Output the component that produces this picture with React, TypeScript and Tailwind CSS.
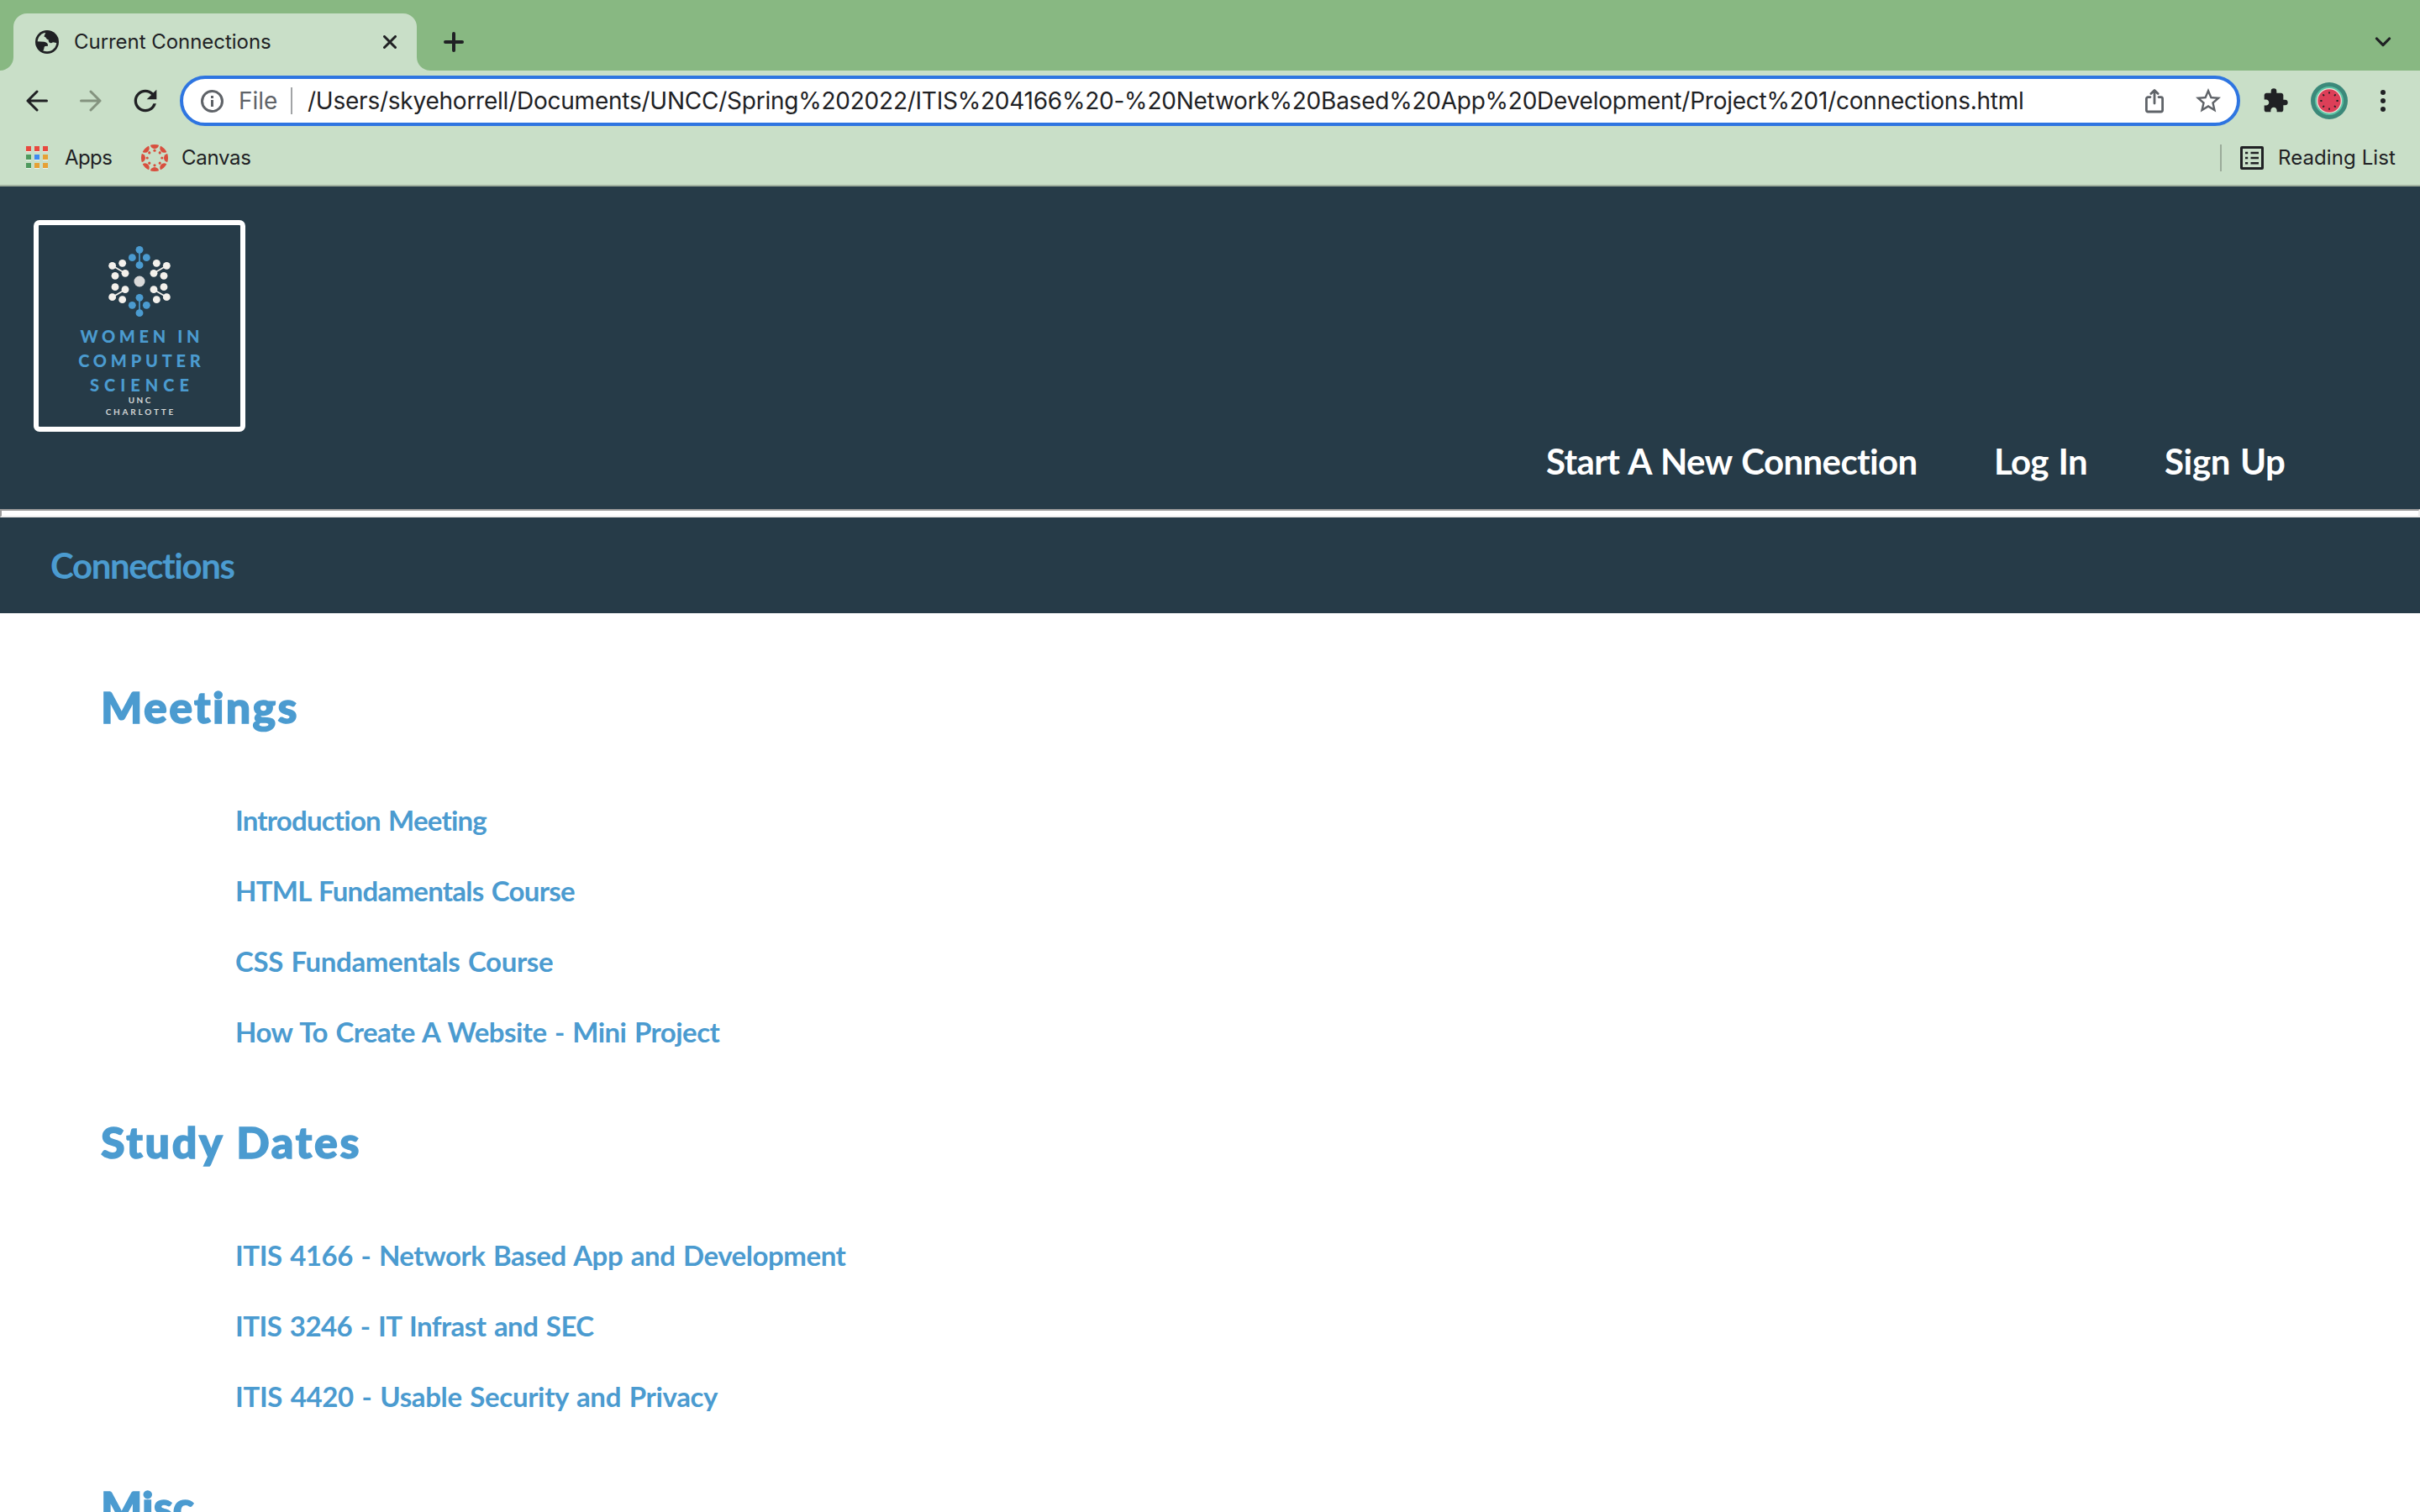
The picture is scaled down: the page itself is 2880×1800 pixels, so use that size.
import React from 'react';
import { MdExtension, MdRefresh, MdStarBorder } from 'react-icons/md';

function GlobeIcon() {
  return (
    <svg className="size-7" viewBox="66 48 84 84">
      <circle cx="108" cy="90" r="42" fill="#202124" />
      <circle cx="108" cy="90" r="34" fill="#c9dfc8" />
      <path fill="#202124" d="M102 50C105 60 97 64 98 71C106 71 103 80 113 82C112 92 121 98 129 91L144 94C146 66 124 48 102 50Z" />
      <path fill="#202124" d="M70 88L98 89C108 91 112 96 111 104L101 105C95 108 100 116 92 123C78 118 69 104 70 88Z" />
    </svg>
  );
}

function ArrowIcon({ className }: { className: string }) {
  return (
    <svg className={className} viewBox="0 0 26 26" fill="none" stroke="currentColor" strokeWidth="3" strokeLinecap="round" strokeLinejoin="round">
      <path d="M13 2L2 13L13 24M2 13H24.5" />
    </svg>
  );
}

function CanvasIcon() {
  const angles = [0, 45, 90, 135, 180, 225, 270, 315];
  return (
    <svg className="size-8" viewBox="-16 -16 32 32" fill="#d84f3e">
      <clipPath id="canvas-disc">
        <circle r="16" />
      </clipPath>
      <g clipPath="url(#canvas-disc)">
        {angles.map((a) => (
          <circle key={a} cx="0" cy="-16.2" r="5.2" transform={`rotate(${a})`} />
        ))}
      </g>
      {angles.map((a) => (
        <circle key={a} cx="0" cy="-8.8" r="1.6" transform={`rotate(${a})`} />
      ))}
    </svg>
  );
}

function WatermelonAvatar() {
  return (
    <svg className="size-11" viewBox="-22 -22 44 44">
      <circle r="22" fill="#3c897a" />
      <circle r="17" fill="#5cc4a6" />
      <circle r="15" fill="#f3e3da" />
      <circle r="13.7" fill="#dc3f58" />
      {[0, 45, 90, 135, 180, 225, 270, 315].map((a) => (
        <rect key={a} x="-0.9" y="-10.8" width="1.8" height="2.4" rx="0.6" fill="#202124" transform={`rotate(${a})`} />
      ))}
    </svg>
  );
}

const appColors = [
  'bg-[#e8493f]', 'bg-[#e8493f]', 'bg-[#e8493f]',
  'bg-[#4f9a5e]', 'bg-[#3f8bf0]', 'bg-[#e6a135]',
  'bg-[#4f9a5e]', 'bg-[#e6a135]', 'bg-[#e6a135]',
];

function TabStrip() {
  return (
    <div className="flex h-[84px] items-end bg-[#88b882]">
      <svg className="size-4" viewBox="0 0 16 16"><path fill="#c9dfc8" d="M16 0V16H0A16 16 0 0 0 16 0Z" /></svg>
      <div className="flex h-[68px] w-[480px] items-center rounded-t-2xl bg-[#c9dfc8] pl-[26px] pr-6 text-[24px]">
        <GlobeIcon />
        <span className="ml-[18px] leading-[28px] -tracking-[0.04px]">Current Connections</span>
        <svg className="ml-auto size-4" viewBox="0 0 16 16" stroke="#202124" strokeWidth="3" strokeLinecap="round"><path d="M1.5 1.5L14.5 14.5M14.5 1.5L1.5 14.5" /></svg>
      </div>
      <svg className="size-4" viewBox="0 0 16 16"><path fill="#c9dfc8" d="M0 0V16H16A16 16 0 0 1 0 0Z" /></svg>
      <div className="ml-4 flex h-[68px] items-center">
        <svg className="size-6" viewBox="0 0 24 24" stroke="#202124" strokeWidth="4" strokeLinecap="round"><path d="M12 2V22M2 12H22" /></svg>
      </div>
      <div className="ml-auto mr-[34px] flex h-[68px] items-center">
        <svg className="h-3 w-[20px]" viewBox="0 0 20 12" fill="none" stroke="#202124" strokeWidth="3.2" strokeLinecap="round" strokeLinejoin="round"><path d="M2.5 2L10 9.6L17.5 2" /></svg>
      </div>
    </div>
  );
}

function Toolbar() {
  return (
    <div className="flex h-[72px] items-center pl-[31px] text-[#202124]">
      <ArrowIcon className="size-[26px]" />
      <ArrowIcon className="ml-[38px] size-[26px] rotate-180 text-[#84937f]" />
      <MdRefresh className="ml-8 size-10" />
      <div className="ml-[21px] flex h-[60px] w-[2452px] items-center rounded-full border-4 border-[#2e75e1] bg-white pl-[21px] pr-4 text-[28px] text-[#5f6368]">
        <svg className="size-[27px]" viewBox="0 0 27 27" fill="none" stroke="currentColor" strokeWidth="3">
          <circle cx="13.5" cy="13.5" r="12" />
          <path d="M13.5 12V20M13.5 7V10" />
        </svg>
        <span className="ml-[18px] w-[62px] leading-8">File</span>
        <span className="h-8 w-0.5 bg-[#a2a4a6]" />
        <span className="ml-[18px] leading-8 -tracking-[0.236px] whitespace-nowrap text-[#202124]">
          /Users/skyehorrell/Documents/UNCC/Spring%202022/ITIS%204166%20-%20Network%20Based%20App%20Development/Project%201/connections.html
        </span>
        <svg className="ml-auto h-[30px] w-[22px]" viewBox="0 0 22 30" fill="none" stroke="currentColor" strokeWidth="2.8" strokeLinecap="round" strokeLinejoin="round">
          <path d="M6 10.6H3.4A2 2 0 0 0 1.4 12.6V26A2 2 0 0 0 3.4 28H18.6A2 2 0 0 0 20.6 26V12.6A2 2 0 0 0 18.6 10.6H16M11 18V3M6.8 6.6L11 2.4L15.2 6.6" />
        </svg>
        <MdStarBorder className="ml-[35px] size-9" />
      </div>
      <MdExtension className="ml-[26px] size-8" />
      <div className="ml-[26px]"><WatermelonAvatar /></div>
      <div className="ml-[39px] flex flex-col gap-1">
        <i className="size-1.5 rounded-full bg-[#202124]" />
        <i className="size-1.5 rounded-full bg-[#202124]" />
        <i className="size-1.5 rounded-full bg-[#202124]" />
      </div>
    </div>
  );
}

function BookmarkBar() {
  return (
    <div className="flex h-[66px] items-center border-b-2 border-[#a1b2a0] pl-[31px] pr-7 text-[24px]">
      <div className="-mt-0.5 grid grid-cols-[6px_6px_6px] gap-1">
        {appColors.map((c, i) => (
          <i key={i} className={`size-1.5 shadow-[0_1px_0_#eef5ee] ${c}`} />
        ))}
      </div>
      <span className="ml-5 w-[91px] leading-[28px] -tracking-[0.6px]">Apps</span>
      <CanvasIcon />
      <span className="ml-4 leading-[28px] -tracking-[0.3px]">Canvas</span>
      <span className="ml-auto mr-[22px] h-8 w-0.5 bg-[#9bab99]" />
      <svg className="size-7" viewBox="0 0 28 28" fill="none" stroke="#202124" strokeWidth="3">
        <rect x="1.5" y="1.5" width="25" height="25" rx="0.5" />
        <path strokeWidth="2.6" d="M6 8H9.2M12.5 8H22M6 14H9.2M12.5 14H22M6 20.3H9.2M12.5 20.3H22" />
      </svg>
      <span className="ml-[17px] w-[141px] leading-[28px] tracking-[0.09px] whitespace-nowrap">Reading List</span>
    </div>
  );
}

const whiteNodes = [
  [311, 199], [357, 226], [347, 190], [321, 235],
  [505, 199], [459, 226], [469, 190], [495, 235],
  [311, 311], [357, 284], [347, 320], [321, 275],
  [505, 311], [459, 284], [469, 320], [495, 275],
];
const blueNodes = [
  [408, 142], [408, 197], [382, 170], [433, 170],
  [408, 313], [408, 368], [382, 340], [433, 340],
];

function MoleculeMark() {
  return (
    <svg className="h-[90px] w-20" viewBox="288 120 240 270">
      <path stroke="#f4f1ec" strokeWidth="5" d="M311 199L357 226M505 199L459 226M311 311L357 284M505 311L459 284" />
      <path stroke="#4b9bd0" strokeWidth="5" d="M408 142V197M408 313V368" />
      <g fill="#f4f1ec">
        {whiteNodes.map(([x, y]) => (
          <circle key={`${x}-${y}`} cx={x} cy={y} r="13.3" />
        ))}
      </g>
      <g fill="#4b9bd0">
        {blueNodes.map(([x, y]) => (
          <circle key={`${x}-${y}`} cx={x} cy={y} r="13.3" />
        ))}
      </g>
      <circle cx="408" cy="255" r="19.5" fill="#d9d9d9" />
    </svg>
  );
}

function Logo() {
  return (
    <div className="flex size-[252px] flex-col items-center rounded-[7px] border-6 border-white pt-[22px]">
      <MoleculeMark />
      <div className="mt-1.5 flex flex-col items-center text-[20px] leading-[28.8px] font-black whitespace-nowrap text-[#4b9bd0]">
        <span className="pl-[5.7px] tracking-[4.7px]">WOMEN IN</span>
        <span className="pl-[4.8px] tracking-[4.8px]">COMPUTER</span>
        <span className="pl-[6px] tracking-[6px]">SCIENCE</span>
      </div>
      <div className="-mt-0.5 flex flex-col items-center text-[10px] leading-[13.6px] text-[#d3d6d6]">
        <span className="pl-[2.5px] tracking-[2.5px]">UNC</span>
        <span className="pl-[2.8px] tracking-[2.8px]">CHARLOTTE</span>
      </div>
    </div>
  );
}

function SiteHeader() {
  return (
    <header className="text-[42px] leading-[52px] font-bold">
      <div className="flex h-[384px] flex-col bg-[#263b48] pl-10 pt-10">
        <Logo />
        <nav className="mt-[9px] flex whitespace-nowrap text-white">
          <a className="ml-[1800px] w-[533px] [word-spacing:2px] -tracking-[0.64px]">Start A New Connection</a>
          <a className="w-[203px] [word-spacing:2px] -tracking-[0.66px]">Log In</a>
          <a className="[word-spacing:2px] -tracking-[0.35px]">Sign Up</a>
        </nav>
      </div>
      <div className="h-2.5 border-2 border-t-[#9a9a9a] border-r-[#eeeeee] border-b-[#eeeeee] border-l-[#9a9a9a] bg-white" />
      <div className="flex h-[114px] items-start bg-[#263b48] pl-[60px] pt-[31px] text-[#4b9bd0]">
        <span className="-tracking-[1.41px]">Connections</span>
      </div>
    </header>
  );
}

const sections = [
  {
    title: 'Meetings',
    spacing: 'tracking-[2.3px]',
    items: [
      { label: 'Introduction Meeting', spacing: '-tracking-[0.8px]' },
      { label: 'HTML Fundamentals Course', spacing: '-tracking-[0.74px]' },
      { label: 'CSS Fundamentals Course', spacing: '-tracking-[0.39px]' },
      { label: 'How To Create A Website - Mini Project', spacing: '-tracking-[0.54px]' },
    ],
  },
  {
    title: 'Study Dates',
    spacing: 'tracking-[2.7px]',
    items: [
      { label: 'ITIS 4166 - Network Based App and Development', spacing: '-tracking-[0.46px]' },
      { label: 'ITIS 3246 - IT Infrast and SEC', spacing: '-tracking-[0.54px]' },
      { label: 'ITIS 4420 - Usable Security and Privacy', spacing: '-tracking-[0.35px]' },
    ],
  },
  { title: 'Misc', spacing: 'tracking-[0px]', items: [] },
];

export default function App() {
  return (
    <div className="h-[1800px] w-[2880px] overflow-hidden bg-white font-['Lato',sans-serif]">
      <div className="bg-[#c9dfc8] font-['Inter',sans-serif] text-[#202124]">
        <TabStrip />
        <Toolbar />
        <BookmarkBar />
      </div>
      <SiteHeader />
      <main className="pt-[21px] text-[#4b9bd0]">
        {sections.map((section) => (
          <section key={section.title} className="pt-[60px]">
            <h2 className={`ml-[120px] w-max text-[52px] leading-[60px] font-black [-webkit-text-stroke:1.5px_#4b9bd0] ${section.spacing}`}>{section.title}</h2>
            <ul className="relative top-px mt-[62px] ml-[280px] text-[33px] leading-[84px] font-bold [word-spacing:2px]">
              {section.items.map((item) => (
                <li key={item.label} className={item.spacing}>{item.label}</li>
              ))}
            </ul>
          </section>
        ))}
      </main>
    </div>
  );
}
